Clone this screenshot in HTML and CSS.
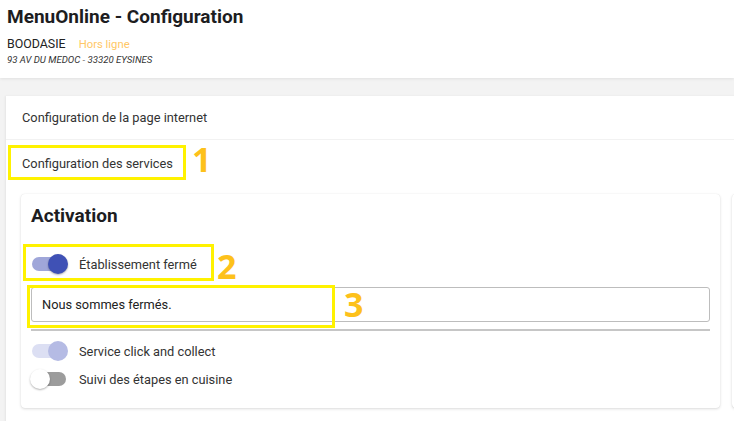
FILE: index.html
```html
<!DOCTYPE html>
<html lang="fr">
<head>
<meta charset="utf-8">
<title>MenuOnline - Configuration</title>
<link rel="stylesheet" href="styles.css">
</head>
<body>
<header class="header">
  <h1 class="title">MenuOnline - Configuration</h1>
  <div class="shop">
    <span class="shop-name">BOODASIE</span>
    <span class="shop-status">Hors ligne</span>
  </div>
  <div class="address">93 AV DU MEDOC - 33320 EYSINES</div>
</header>

<main class="main">
  <section class="panel">
    <div class="row row-first">Configuration de la page internet</div>
    <div class="row row-second">Configuration des services</div>
    <div class="cards">
      <div class="card">
        <h2 class="card-title">Activation</h2>
        <label class="toggle-row toggle-row-first">
          <span class="switch on"><span class="track"></span><span class="thumb"></span></span>
          <span class="toggle-label">Établissement fermé</span>
        </label>
        <div class="input-box">Nous sommes fermés.</div>
        <div class="underline"></div>
        <label class="toggle-row">
          <span class="switch disabled"><span class="track"></span><span class="thumb"></span></span>
          <span class="toggle-label">Service click and collect</span>
        </label>
        <label class="toggle-row">
          <span class="switch off"><span class="track"></span><span class="thumb"></span></span>
          <span class="toggle-label">Suivi des étapes en cuisine</span>
        </label>
      </div>
      <div class="card card-next"></div>
    </div>
  </section>

  <div class="mark mark-1"></div>
  <div class="num num-1">1</div>
  <div class="mark mark-2"></div>
  <div class="num num-2">2</div>
  <div class="mark mark-3"></div>
  <div class="num num-3">3</div>
</main>
</body>
</html>
```

FILE: styles.css
```css
* { box-sizing: border-box; }

html, body {
  margin: 0;
  padding: 0;
  background: #f3f3f3;
  font-family: Roboto, "Liberation Sans", Arial, sans-serif;
  color: #222;
  overflow: hidden;
  width: 734px;
  height: 421px;
}

.header {
  background: #fff;
  height: 78px;
  padding: 5px 7px 0;
  box-shadow: 0 1px 3px rgba(0, 0, 0, 0.08);
  position: relative;
  z-index: 1;
}

.title {
  margin: 0;
  font-size: 19px;
  font-weight: 700;
  line-height: 24px;
  color: #1d1d1f;
}

.shop {
  margin-top: 8px;
  display: flex;
  align-items: baseline;
  gap: 13px;
  line-height: 14px;
}

.shop-name {
  font-size: 12.4px;
  color: #222;
}

.shop-status {
  font-size: 11.3px;
  color: #ffc766;
}

.address {
  margin-top: 3px;
  font-size: 9.6px;
  font-style: italic;
  color: #333;
  line-height: 10px;
}

.main {
  position: relative;
  padding: 18px 0 0 6px;
}

.panel {
  background: #fff;
  width: 760px;
  height: 340px;
  box-shadow: -1px 0 2px rgba(0, 0, 0, 0.06);
}

.row {
  font-size: 12.8px;
  color: #333;
  padding-left: 16px;
  display: flex;
  align-items: center;
}

.row-first {
  height: 44px;
  border-bottom: 1px solid #f2f2f2;
}

.row-second {
  height: 42px;
  padding-top: 4px;
}

.cards {
  display: grid;
  grid-template-columns: 699px 100px;
  column-gap: 12px;
  padding: 12px 0 0 15px;
}

.card {
  background: #fff;
  border-radius: 4px;
  box-shadow: 0 1px 3px rgba(0, 0, 0, 0.14), 0 0 1px rgba(0, 0, 0, 0.1);
  height: 214px;
  padding: 9px 10px 0;
}

.card-title {
  margin: 0;
  font-size: 19px;
  font-weight: 700;
  line-height: 26px;
  color: #1d1d1f;
}

.toggle-row {
  display: flex;
  align-items: center;
  height: 28px;
  gap: 11px;
}

.toggle-row-first {
  margin-top: 21px;
  margin-bottom: 9px;
}

.toggle-label {
  font-size: 12.8px;
  color: #333;
}

.switch {
  position: relative;
  width: 37px;
  height: 20px;
  flex: none;
}

.switch .track {
  position: absolute;
  left: 1px;
  top: 3px;
  width: 34px;
  height: 14px;
  border-radius: 7px;
}

.switch .thumb {
  position: absolute;
  top: 0;
  width: 20px;
  height: 20px;
  border-radius: 50%;
  box-shadow: 0 1px 2px rgba(0, 0, 0, 0.3);
}

.switch.on .track { background: #9fa6d9; }
.switch.on .thumb { left: 17px; background: #3f51b5; }

.switch.disabled .track { background: #dcdff3; }
.switch.disabled .thumb { left: 17px; background: #b5bbe4; box-shadow: none; }

.switch.off .track { background: #9c9c9c; }
.switch.off .thumb { left: -1px; background: #fff; }

.input-box {
  height: 35px;
  border: 1px solid #bdbdbd;
  border-radius: 3px;
  font-size: 12.8px;
  color: #222;
  padding: 0 10px;
  display: flex;
  align-items: center;
}

.underline {
  margin-top: 7px;
  height: 2px;
  background: #c6c6c6;
  margin-bottom: 6px;
}

/* annotation overlays */
.mark {
  position: absolute;
  border: 3px solid #fff200;
}

.mark-1 { left: 8px; top: 67px; width: 178px; height: 35px; }
.mark-2 { left: 23px; top: 166px; width: 191px; height: 37px; }
.mark-3 { left: 27px; top: 207px; width: 308px; height: 43px; }

.num {
  position: absolute;
  font-family: "Open Sans", "Liberation Sans", sans-serif;
  font-weight: 700;
  font-size: 34px;
  line-height: 34px;
  color: #fdc11b;
}

.num-1 { left: 192px; top: 64px; }
.num-2 { left: 217px; top: 171px; }
.num-3 { left: 344px; top: 209px; }
```
